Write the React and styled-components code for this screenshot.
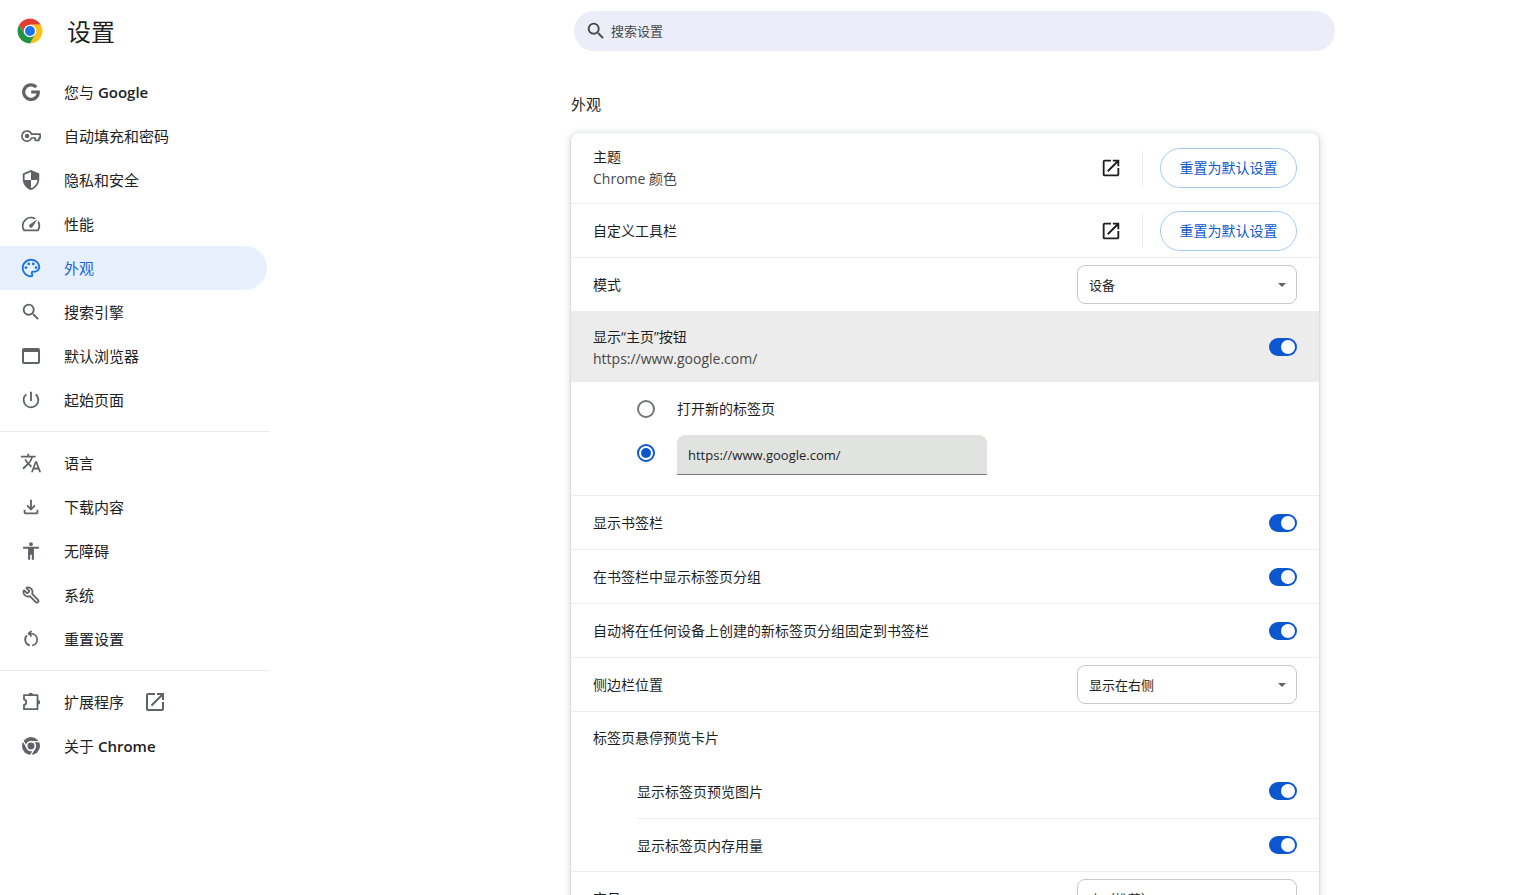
import * as React from 'react';
import styled, { createGlobalStyle, css } from 'styled-components';
import { Wrench } from 'lucide-react';
import {
  MdOpenInNew,
  MdOutlineFileDownload,
  MdOutlinePalette,
  MdOutlineSpeed,
  MdPowerSettingsNew,
  MdSearch,
  MdSecurity,
  MdTranslate,
  MdWebAsset
} from 'react-icons/md';

const ChromeLogo = () => (
  <svg width="26" height="26" viewBox="0 0 50 50" aria-hidden="true">
    <path fill="#e33b2e" d="M4.220 13A24 24 0 0 1 45.780 13H25L14.610 31z" />
    <path fill="#fbc116" d="M45.780 13A24 24 0 0 1 25 49L35.390 31 25 13z" />
    <path fill="#229342" d="M25 49A24 24 0 0 1 4.220 13L14.610 31H35.390z" />
    <circle cx="25" cy="25" r="12" fill="#fff" />
    <circle cx="25" cy="25" r="9.500" fill="#1a73e8" />
  </svg>
);

const GoogleIcon = () => (
  <svg width="18" height="18" viewBox="0 0 18 18" aria-hidden="true">
    <path
      fill="none"
      stroke="currentColor"
      strokeWidth="3.2"
      d="M14.300 4.100A7.300 7.300 0 1 0 16.300 9H9.200"
    />
  </svg>
);

const KeyIcon = () => (
  <svg width="20" height="12" viewBox="0 0 20 12" fill="none" stroke="currentColor" strokeWidth="1.700" aria-hidden="true">
    <path strokeLinejoin="round" d="M10.700 4.200H19.100v3.900H17.900V10.300H14.200V8H10.700A5.100 5.100 0 1 1 10.700 4.200z" />
    <circle cx="6" cy="6" r="2.200" fill="currentColor" stroke="none" />
  </svg>
);

const AccessibilityIcon = () => (
  <svg width="20" height="20" viewBox="0 0 24 24" fill="currentColor" aria-hidden="true">
    <path d="M12 1.500a2.300 2.300 0 1 1 0 4.600 2.300 2.300 0 0 1 0-4.600zM21.500 9.200H15.500V22.500h-2.500v-6h-2v6H8.500V9.200H2.500V7h19z" />
  </svg>
);

const ResetIcon = () => (
  <svg width="22" height="22" viewBox="0 0 22 22" fill="none" stroke="currentColor" strokeWidth="1.7" aria-hidden="true">
    <path d="M9.8 17.5A6 6 0 0 1 6.9 7.4M12.2 17.5A6 6 0 0 0 11 5.6H8.6" />
    <path d="M11.5 2.8L8.7 5.6l2.8 2.8" />
  </svg>
);

const ExtensionIcon = () => (
  <svg width="22" height="22" viewBox="0 0 22 22" aria-hidden="true">
    <path
      fill="none"
      stroke="currentColor"
      strokeWidth="1.8"
      strokeLinejoin="round"
      d="M4 4.200h13.500v14H4v-4.200c3-.6 3-5 0-5.600z"
    />
    <path fill="currentColor" d="M8.500 4a2.300 2.300 0 0 1 4.600 0zM17.900 8.900a2.300 2.300 0 0 1 0 4.600z" />
  </svg>
);

const ChromeIcon = () => (
  <svg width="18" height="18" viewBox="0 0 48 48" aria-hidden="true">
    <circle cx="24" cy="24" r="24" fill="currentColor" />
    <path fill="none" stroke="#fff" strokeWidth="3.500" d="M24 12.500H46M14 29.700L3 10.700M34 29.700L23 48.700" />
    <circle cx="24" cy="24" r="11.500" fill="currentColor" stroke="#fff" strokeWidth="4.500" />
  </svg>
);

const menu = [
  [
    { label: '您与', latin: 'Google', icon: <GoogleIcon /> },
    { label: '自动填充和密码', icon: <KeyIcon /> },
    { label: '隐私和安全', icon: <MdSecurity /> },
    { label: '性能', icon: <MdOutlineSpeed /> },
    { label: '外观', icon: <MdOutlinePalette />, active: true },
    { label: '搜索引擎', icon: <MdSearch /> },
    { label: '默认浏览器', icon: <MdWebAsset size={24} /> },
    { label: '起始页面', icon: <MdPowerSettingsNew /> }
  ],
  [
    { label: '语言', icon: <MdTranslate /> },
    { label: '下载内容', icon: <MdOutlineFileDownload /> },
    { label: '无障碍', icon: <AccessibilityIcon /> },
    { label: '系统', icon: <Wrench size={18} strokeWidth={2.4} transform="scale(-1 1)" /> },
    { label: '重置设置', icon: <ResetIcon /> }
  ],
  [
    { label: '扩展程序', icon: <ExtensionIcon />, external: true },
    { label: '关于', latin: 'Chrome', icon: <ChromeIcon /> }
  ]
];

const ResetRow = ({ label, sub }) => (
  <Row $first={!!sub}>
    <Text>
      <Label>{label}</Label>
      {sub && <Sub>{sub}</Sub>}
    </Text>
    <IconButton aria-label={`打开${label}`}>
      <MdOpenInNew size={22} />
    </IconButton>
    <Separator />
    <ResetButton>重置为默认设置</ResetButton>
  </Row>
);

const SelectRow = ({ id, label, options }) => (
  <Row>
    <Label as="label" htmlFor={id}>
      {label}
    </Label>
    <SelectWrap>
      <Select id={id}>
        {options.map(option => (
          <option key={option}>{option}</option>
        ))}
      </Select>
    </SelectWrap>
  </Row>
);

const ToggleRow = ({ id, label, sub, RowType = Row }) => (
  <RowType $highlighted={!!sub}>
    <Text>
      <Label as="label" htmlFor={id}>
        {label}
      </Label>
      {sub && <Sub>{sub}</Sub>}
    </Text>
    <Toggle id={id} defaultChecked />
  </RowType>
);

class App extends React.Component {
  render() {
    return (
      <React.Fragment>
        <GlobalStyle />
        <Page>
          <Sidebar>
            <Brand>
              <ChromeLogo />
              <Title>设置</Title>
            </Brand>
            <nav>
              {menu.map((group, i) => (
                <MenuGroup key={i}>
                  {group.map(({ label, latin, icon, active, external }) => (
                    <MenuItem key={label} href="#" $active={active}>
                      <MenuIcon $active={active}>{icon}</MenuIcon>
                      <span>
                        {label}
                        {latin && <Latin> {latin}</Latin>}
                      </span>
                      {external && <ExternalIcon size={24} />}
                    </MenuItem>
                  ))}
                </MenuGroup>
              ))}
            </nav>
          </Sidebar>
          <Main>
            <Toolbar>
              <SearchBox>
                <MdSearch size={22} />
                <SearchInput type="search" placeholder="搜索设置" aria-label="搜索设置" />
              </SearchBox>
            </Toolbar>
            <Section>
              <SectionTitle>外观</SectionTitle>
              <Card>
                <ResetRow label="主题" sub="Chrome 颜色" />
                <ResetRow label="自定义工具栏" />
                <SelectRow id="mode" label="模式" options={['设备', '浅色', '深色']} />
                <ToggleRow id="home" label="显示“主页”按钮" sub="https://www.google.com/" />
                <RadioGroup>
                  <RadioRow>
                    <Radio id="newtab" name="homepage" />
                    <Label as="label" htmlFor="newtab">
                      打开新的标签页
                    </Label>
                  </RadioRow>
                  <RadioRow>
                    <Radio id="custom" name="homepage" aria-label="自定义网址" defaultChecked />
                    <UrlInput type="text" aria-label="网址" defaultValue="https://www.google.com/" />
                  </RadioRow>
                </RadioGroup>
                <ToggleRow id="bookmarks" label="显示书签栏" />
                <ToggleRow id="groups" label="在书签栏中显示标签页分组" />
                <ToggleRow id="pin" label="自动将在任何设备上创建的新标签页分组固定到书签栏" />
                <SelectRow id="side" label="侧边栏位置" options={['显示在右侧', '显示在左侧']} />
                <HeadingRow>
                  <Label>标签页悬停预览卡片</Label>
                </HeadingRow>
                <SubRows>
                  <ToggleRow id="images" label="显示标签页预览图片" RowType={SubRow} />
                  <ToggleRow id="memory" label="显示标签页内存用量" RowType={SubRow} />
                </SubRows>
                <SelectRow id="size" label="字号" options={['中（推荐）', '小', '大']} />
              </Card>
            </Section>
          </Main>
        </Page>
      </React.Fragment>
    );
  }
}

const GlobalStyle = createGlobalStyle`
  * {
    box-sizing: border-box;
  }

  body {
    margin: 0;
    background: #fff;
    color: #1f1f1f;
  }

  body, button, input, select {
    font-family: 'Open Sans', 'Noto Sans CJK SC', sans-serif;
  }
`;

const Page = styled.div`
  display: flex;
  height: 100vh;
  overflow-x: hidden;
  overflow-y: auto;
  scrollbar-width: none;
`;

const Sidebar = styled.aside`
  flex: 0 0 270px;
`;

const Brand = styled.header`
  display: flex;
  align-items: center;
  gap: 24px;
  height: 62px;
  padding-left: 17px;
`;

const Title = styled.h1`
  margin: 0;
  padding-top: 2px;
  font-size: 24px;
  font-weight: 400;
  line-height: 32px;
`;

const MenuGroup = styled.div`
  padding: 8px 0 9px;

  & + & {
    border-top: 1px solid #e8eaed;
    padding-top: 9px;
  }
`;

const MenuItem = styled.a`
  display: flex;
  align-items: center;
  height: 44px;
  margin-right: 3px;
  padding-left: 20px;
  border-radius: 0 22px 22px 0;
  background: ${({ $active }) => ($active ? '#e8f0fe' : 'transparent')};
  color: ${({ $active }) => ($active ? '#1967d2' : '#202124')};
  font-size: 15px;
  line-height: 22px;
  text-decoration: none;
`;

const MenuIcon = styled.span`
  display: flex;
  align-items: center;
  justify-content: center;
  width: 22px;
  margin-right: 22px;
  color: ${({ $active }) => ($active ? '#1a73e8' : '#5f6368')};
  font-size: 22px;

  svg {
    flex: none;
  }
`;

const Latin = styled.span`
  font-weight: 600;
`;

const ExternalIcon = styled(MdOpenInNew)`
  margin-left: 19px;
  color: #5f6368;
`;

const Main = styled.main`
  flex: 1;
  min-width: 0;
`;

const Toolbar = styled.div`
  display: flex;
  align-items: center;
  justify-content: center;
  height: 62px;
  padding-left: 109px;
`;

const SearchBox = styled.div`
  display: flex;
  align-items: center;
  gap: 4px;
  width: 100%;
  max-width: 761px;
  height: 40px;
  padding: 0 11px;
  border-radius: 20px;
  background: #ebeef8;
  color: #474747;
`;

const SearchInput = styled.input`
  flex: 1;
  padding: 0;
  border: none;
  outline: none;
  background: transparent;
  color: #474747;
  font-size: 13px;

  &::placeholder {
    color: #474747;
    opacity: 1;
  }
`;

const Section = styled.section`
  max-width: 838px;
  margin: 0 auto;
  padding-left: 90px;
`;

const SectionTitle = styled.h2`
  margin: 0;
  padding: 31px 0 18px;
  font-size: 15px;
  font-weight: 400;
  line-height: 22px;
`;

const Card = styled.div`
  border-radius: 8px;
  background: #fff;
  box-shadow: 0 1px 2px rgba(60, 64, 67, 0.3), 0 1px 6px 2px rgba(60, 64, 67, 0.15);
  overflow: hidden;
`;

const Row = styled.div`
  display: flex;
  align-items: center;
  justify-content: space-between;
  min-height: 54px;
  padding: 0 22px;
  border-top: 1px solid #ededed;

  ${({ $first }) =>
    $first &&
    css`
      min-height: 70px;
      border-top: none;
    `}

  ${({ $highlighted }) =>
    $highlighted &&
    css`
      min-height: 71px;
      background: #ececec;
    `}
`;

const HeadingRow = styled(Row)`
  min-height: 53px;
`;

const SubRows = styled.div`
  padding-left: 66px;
`;

const SubRow = styled.div`
  display: flex;
  align-items: center;
  min-height: 54px;
  padding-right: 22px;

  & + & {
    min-height: 53px;
    border-top: 1px solid #ededed;
  }
`;

const Text = styled.div`
  flex: 1;
`;

const Label = styled.div`
  font-size: 14px;
  line-height: 22px;
`;

const Sub = styled.div`
  color: #474747;
  font-size: 14px;
  line-height: 22px;
`;

const IconButton = styled.button`
  display: flex;
  align-items: center;
  justify-content: center;
  width: 40px;
  height: 40px;
  padding: 0;
  border: none;
  border-radius: 50%;
  background: transparent;
  color: #1f1f1f;
`;

const Separator = styled.div`
  width: 1px;
  height: 35px;
  margin: 0 17px 0 11px;
  background: #ededed;
`;

const ResetButton = styled.button`
  height: 40px;
  min-width: 137px;
  padding: 0 16px;
  border: 1px solid #a8c7fa;
  border-radius: 20px;
  background: #fff;
  color: #0b57d0;
  font-size: 14px;
  line-height: 22px;
`;

const SelectWrap = styled.div`
  position: relative;

  &::after {
    content: '';
    position: absolute;
    top: 18px;
    right: 11px;
    border: 4px solid transparent;
    border-top-color: #5f6368;
    border-bottom: none;
    pointer-events: none;
  }
`;

const Select = styled.select`
  display: block;
  width: 220px;
  height: 39px;
  padding: 0 28px 0 11px;
  border: 1px solid #c7c7c7;
  border-radius: 8px;
  background: #fff;
  color: #1f1f1f;
  font-size: 13px;
  appearance: none;
`;

const Toggle = styled.input.attrs({ type: 'checkbox', role: 'switch' })`
  display: flex;
  width: 28px;
  height: 18px;
  margin: 0;
  padding: 2px;
  border-radius: 9px;
  background: #c7c7c7;
  appearance: none;

  &::before {
    content: '';
    width: 14px;
    height: 14px;
    border-radius: 50%;
    background: #fff;
  }

  &:checked {
    justify-content: flex-end;
    background: #0b57d0;
  }
`;

const RadioGroup = styled.div`
  padding: 5px 22px 20px 66px;
`;

const RadioRow = styled.div`
  display: flex;
  align-items: center;
  gap: 22px;
  height: 44px;
`;

const Radio = styled.input.attrs({ type: 'radio' })`
  display: flex;
  align-items: center;
  justify-content: center;
  width: 18px;
  height: 18px;
  margin: 0;
  border: 2px solid #747775;
  border-radius: 50%;
  appearance: none;

  &:checked {
    border-color: #0b57d0;
  }

  &:checked::before {
    content: '';
    width: 10px;
    height: 10px;
    border-radius: 50%;
    background: #0b57d0;
  }
`;

const UrlInput = styled.input`
  align-self: flex-end;
  width: 310px;
  height: 40px;
  padding: 0 11px;
  border: none;
  border-bottom: 1px solid #747775;
  border-radius: 8px 8px 0 0;
  outline: none;
  background: #e1e3e1;
  color: #1f1f1f;
  font-size: 13px;
`;

export default App;
